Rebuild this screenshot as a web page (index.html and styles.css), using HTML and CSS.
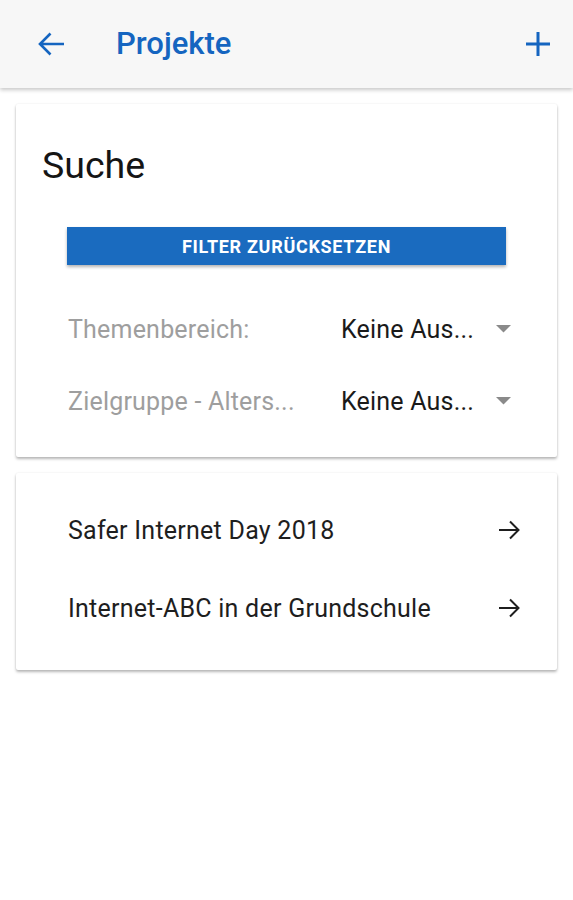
FILE: index.html
```html
<!DOCTYPE html>
<html lang="de">
<head>
<meta charset="utf-8">
<title>Projekte</title>
<link rel="stylesheet" href="styles.css">
</head>
<body>
<header class="appbar">
  <span class="icon back">
    <svg width="28" height="26" viewBox="0 0 28 26"><path d="M27 13H3 M13.5 2.5 L3 13 L13.5 23.5" fill="none" stroke="#1565c0" stroke-width="2.6" stroke-linecap="butt" stroke-linejoin="miter"/></svg>
  </span>
  <h1 class="title">Projekte</h1>
  <span class="icon add">
    <svg width="26" height="26" viewBox="0 0 26 26"><path d="M13 1V25 M1 13H25" fill="none" stroke="#1565c0" stroke-width="3"/></svg>
  </span>
</header>
<main class="content">
  <section class="card search">
    <h2 class="search-title">Suche</h2>
    <div class="filters">
      <div class="reset-btn">FILTER ZURÜCKSETZEN</div>
      <div class="rows">
        <div class="row">
          <span class="label">Themenbereich:</span>
          <span class="value">Keine Aus...</span>
          <svg class="caret" width="15" height="8" viewBox="0 0 15 8"><polygon points="0,0 15,0 7.5,7.5" fill="#8a8a8a"/></svg>
        </div>
        <div class="row">
          <span class="label">Zielgruppe - Alters...</span>
          <span class="value">Keine Aus...</span>
          <svg class="caret" width="15" height="8" viewBox="0 0 15 8"><polygon points="0,0 15,0 7.5,7.5" fill="#8a8a8a"/></svg>
        </div>
      </div>
    </div>
  </section>
  <section class="card list">
    <div class="item">
      <span class="item-text">Safer Internet Day 2018</span>
      <svg class="go" width="22" height="20" viewBox="0 0 22 20"><path d="M1 10H20.5 M12 1.5 L20.5 10 L12 18.5" fill="none" stroke="#1e1e1e" stroke-width="2"/></svg>
    </div>
    <div class="item">
      <span class="item-text">Internet-ABC in der Grundschule</span>
      <svg class="go" width="22" height="20" viewBox="0 0 22 20"><path d="M1 10H20.5 M12 1.5 L20.5 10 L12 18.5" fill="none" stroke="#1e1e1e" stroke-width="2"/></svg>
    </div>
  </section>
</main>
</body>
</html>
```
FILE: styles.css
```css
* { box-sizing: border-box; }
html, body { margin: 0; padding: 0; background: #ffffff; }
body { font-family: Roboto, "Noto Sans", "Liberation Sans", sans-serif; color: #212121; }

.appbar {
  height: 88px;
  background: #f7f7f7;
  display: flex;
  align-items: center;
  padding: 0 22px 0 37px;
  box-shadow: 0 2px 4px rgba(0,0,0,0.22);
  position: relative;
  z-index: 1;
}
.icon { display: flex; }
.title {
  margin: 0 0 0 51px;
  font-size: 31px;
  font-weight: 500;
  color: #1565c0;
  flex: 1;
  line-height: 36px;
}

.content { padding: 16px; }
.card {
  background: #fff;
  border-radius: 2px;
  box-shadow: 0 2px 3px rgba(0,0,0,0.28), 0 0 2px rgba(0,0,0,0.08);
}
.card + .card { margin-top: 16px; }

.search { padding: 0 0 20px; }
.search-title {
  margin: 0;
  padding: 39px 0 0 26px;
  font-size: 37.5px;
  line-height: 44px;
  font-weight: 400;
  color: #151515;
}
.filters { padding: 40px 51px 0; }
.reset-btn {
  height: 38px;
  background: #1a6bbf;
  color: #fff;
  font-size: 18px;
  font-weight: 700;
  letter-spacing: 0.7px;
  display: flex;
  align-items: center;
  justify-content: center;
  box-shadow: 0 2px 3px rgba(0,0,0,0.3);
}
.rows { margin-top: 28px; }
.row {
  height: 72px;
  display: flex;
  align-items: center;
  font-size: 25px;
  letter-spacing: 0.2px;
}
.label { width: 274px; padding-left: 1px; color: #9e9e9e; }
.value { flex: 1; color: #1a1a1a; }
.caret { margin-right: -5px; }

.list { padding: 18px 0 23px; }
.item {
  height: 78px;
  display: flex;
  align-items: center;
  padding: 0 37px 0 52px;
  font-size: 25px;
  letter-spacing: 0.25px;
}
.item-text { flex: 1; color: #1e1e1e; }
```
